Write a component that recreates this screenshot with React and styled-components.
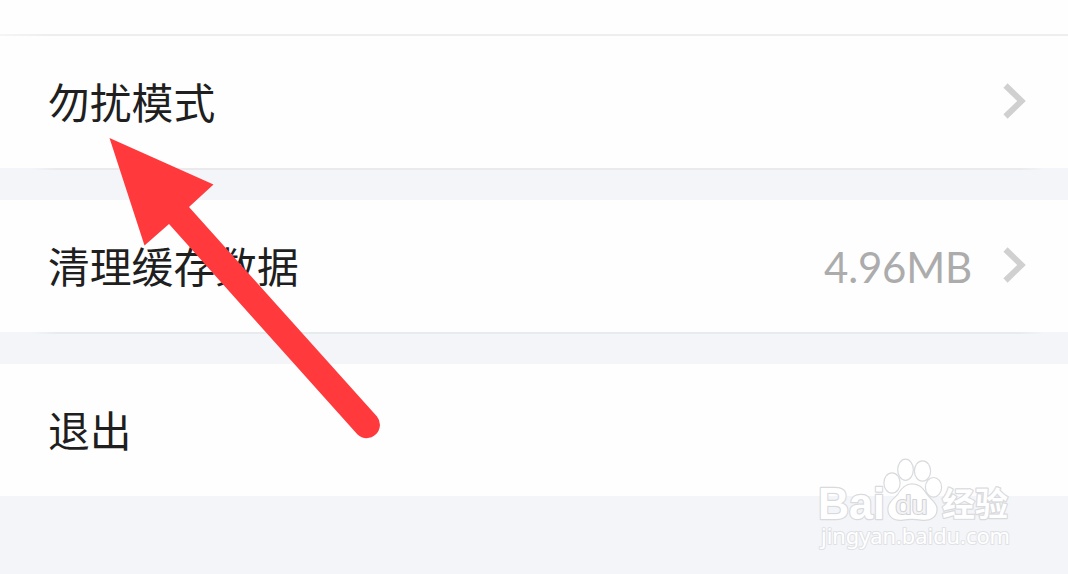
import styled, { createGlobalStyle } from "styled-components";

const GlobalStyle = createGlobalStyle`
  * {
    box-sizing: border-box;
  }

  body {
    margin: 0;
    background-color: #f3f5f9;
    font-family: "Noto Sans CJK SC", sans-serif;
  }
`;

const Page = styled.div`
  position: relative;
  width: 100%;
  height: 100vh;
  overflow: hidden;
  display: flex;
  flex-direction: column;
`;

const PreviousRow = styled.div`
  flex: none;
  height: 34px;
  background-color: #fefefe;
`;

const Divider = styled.div`
  flex: none;
  height: 2px;
  background: linear-gradient(to right, #f5f5f5, #eeeeef 48px);
`;

const Group = styled.div`
  flex: none;
  margin-bottom: 32px;
`;

const Row = styled.div`
  height: 132px;
  padding: 0 42px 0 48px;
  display: flex;
  align-items: center;
  background-color: #fefefe;
`;

const Edge = styled.div`
  height: 2px;
  margin: 0 24px -2px 32px;
  background: linear-gradient(
    to right,
    transparent,
    ${(props) => props.$color} 24px,
    ${(props) => props.$color} calc(100% - 24px),
    transparent
  );
`;

const Label = styled.span`
  flex: 1;
  padding-bottom: 3px;
  font-size: 41.8px;
  line-height: 60px;
  color: #1f1f1f;
`;

const Value = styled.span`
  margin-right: 31px;
  padding-top: 2px;
  font-family: Lato, sans-serif;
  font-size: 42px;
  line-height: 60px;
  letter-spacing: -0.2px;
  color: #acacac;
`;

const Chevron = styled.svg`
  flex: none;
  width: 23px;
  height: 36px;
  margin-top: -2px;
  fill: none;
  stroke: #d0d0d0;
  stroke-width: 6;
`;

const Arrow = styled.svg`
  position: absolute;
  top: 130px;
  left: 100px;
  width: 290px;
  height: 320px;
  fill: #ff393c;
`;

const Watermark = styled.svg`
  position: absolute;
  top: 450px;
  left: 810px;
  width: 210px;
  height: 110px;
  fill: #ffffff;
  stroke: #d9dadd;
  stroke-width: 2.4;
  stroke-linejoin: round;
  paint-order: stroke;
`;

const More = () => (
  <Chevron viewBox="0 0 23 36">
    <path d="M2.5 2.5 L18.5 18 L2.5 33.5" />
  </Chevron>
);

const BaiduMark = () => (
  <Watermark viewBox="810 450 210 110">
    <text
      x="818"
      y="518.5"
      fontFamily="Liberation Sans"
      fontWeight="700"
      fontSize="45"
      textLength="67"
      lengthAdjust="spacingAndGlyphs"
    >
      Bai
    </text>
    <ellipse cx="892" cy="483" rx="7.5" ry="9.5" />
    <ellipse cx="905.5" cy="469.7" rx="7.2" ry="10" />
    <ellipse cx="922.5" cy="471" rx="7.5" ry="9.5" />
    <ellipse cx="933.5" cy="487.3" rx="7.5" ry="9.2" />
    <path d="M912 484.5 C905 484.5 901 490 898 495 C893 500 888 504 888.5 510 C889 518 896 520.5 903 519.5 C909 518.5 915 518.5 921 519.5 C929 520.5 936.5 518 936.5 509 C936.5 503 930 500 926 494 C922 488 919 484.5 912 484.5 Z" />
    <text
      x="895.5"
      y="513.5"
      fontFamily="Liberation Sans"
      fontSize="26"
      fill="#f4f4f6"
      stroke="#d2d3d6"
      strokeWidth="2"
      textLength="32"
      lengthAdjust="spacingAndGlyphs"
    >
      du
    </text>
    <text
      x="942"
      y="516"
      fontFamily="Noto Sans CJK SC"
      fontWeight="700"
      fontSize="33"
      textLength="66"
      lengthAdjust="spacingAndGlyphs"
    >
      经验
    </text>
    <text
      x="821"
      y="544"
      fontFamily="Noto Sans"
      fontSize="22"
      stroke="#e0e1e4"
      strokeWidth="2"
      textLength="189"
      lengthAdjust="spacingAndGlyphs"
    >
      jingyan.baidu.com
    </text>
  </Watermark>
);

const App = () => {
  return (
    <>
      <GlobalStyle />
      <Page>
        <PreviousRow />
        <Divider />
        <Group>
          <Row>
            <Label>勿扰模式</Label>
            <More />
          </Row>
          <Edge $color="#eaeaec" />
        </Group>
        <Group>
          <Row>
            <Label>清理缓存数据</Label>
            <Value>4.96MB</Value>
            <More />
          </Row>
          <Edge $color="#e6eced" />
        </Group>
        <Group>
          <Row>
            <Label>退出</Label>
          </Row>
        </Group>
        <Arrow viewBox="100 130 290 320">
          <path d="M109.5 138 L213.5 184.5 L189 207 L377 416.5 A13.3 13.3 0 0 1 357.5 434.5 L169 224 L144.5 245.5 Z" />
        </Arrow>
        <BaiduMark />
      </Page>
    </>
  );
};

export default App;
